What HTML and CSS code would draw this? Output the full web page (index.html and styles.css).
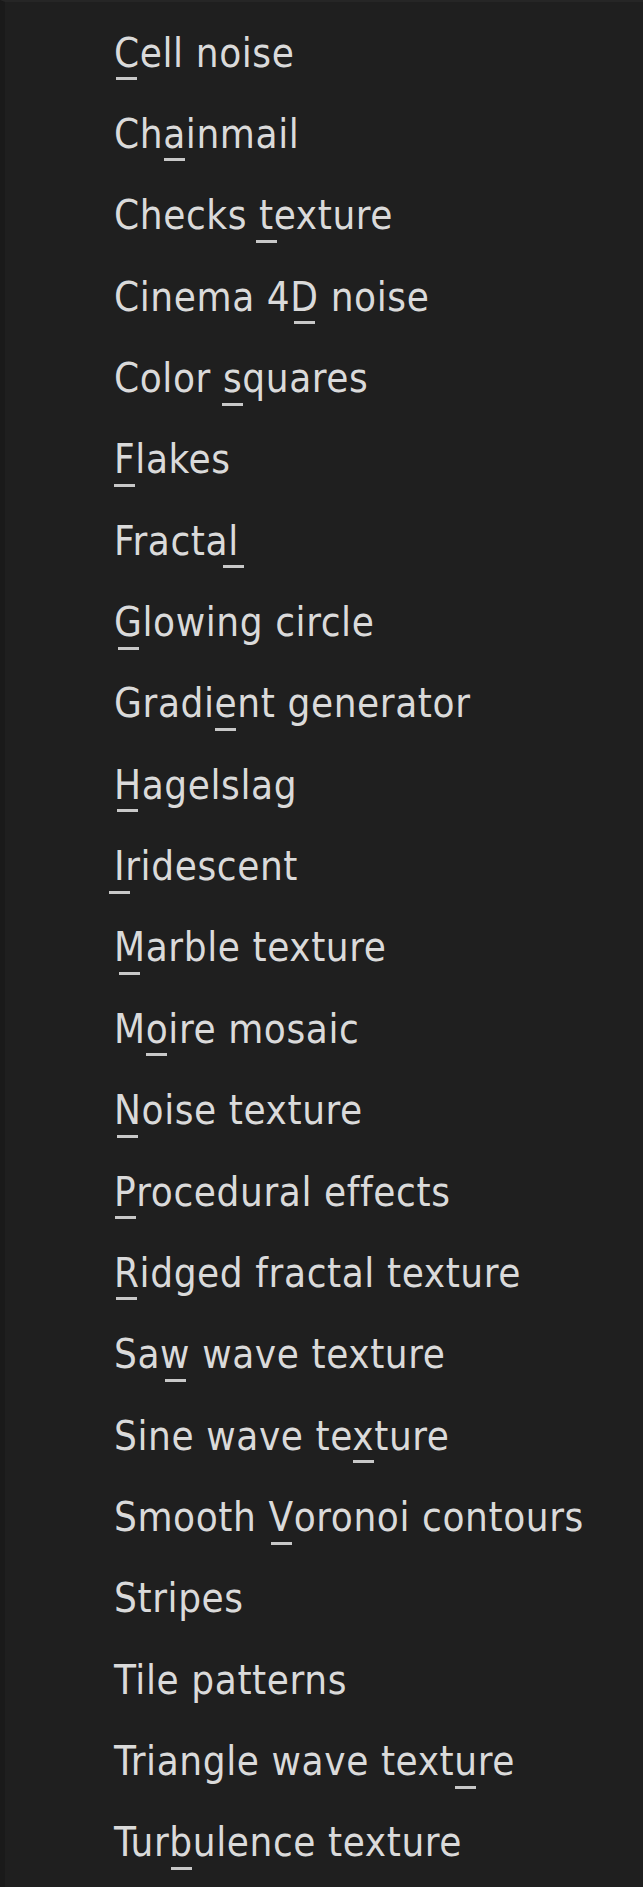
FILE: index.html
```html
<!DOCTYPE html>
<html>
<head>
<meta charset="utf-8">
<link rel="stylesheet" href="styles.css">
</head>
<body>
<div class="menu">
  <div class="item"><span class="key">C</span>ell noise</div>
  <div class="item">Ch<span class="key">a</span>inmail</div>
  <div class="item">Checks <span class="key">t</span>exture</div>
  <div class="item">Cinema 4<span class="key">D</span> noise</div>
  <div class="item">Color <span class="key">s</span>quares</div>
  <div class="item"><span class="key">F</span>lakes</div>
  <div class="item">Fracta<span class="key">l</span></div>
  <div class="item"><span class="key">G</span>lowing circle</div>
  <div class="item">Gradi<span class="key">e</span>nt generator</div>
  <div class="item"><span class="key">H</span>agelslag</div>
  <div class="item"><span class="key">I</span>ridescent</div>
  <div class="item"><span class="key">M</span>arble texture</div>
  <div class="item">M<span class="key">o</span>ire mosaic</div>
  <div class="item"><span class="key">N</span>oise texture</div>
  <div class="item"><span class="key">P</span>rocedural effects</div>
  <div class="item"><span class="key">R</span>idged fractal texture</div>
  <div class="item">Sa<span class="key">w</span> wave texture</div>
  <div class="item">Sine wave te<span class="key">x</span>ture</div>
  <div class="item">Smooth <span class="key">V</span>oronoi contours</div>
  <div class="item">Stripes</div>
  <div class="item">Tile patterns</div>
  <div class="item">Triangle wave text<span class="key">u</span>re</div>
  <div class="item">Tur<span class="key">b</span>ulence texture</div>
</div>
</body>
</html>
```
FILE: styles.css
```css
html, body {
  margin: 0;
  padding: 0;
  background: #1f1f1f;
}
body {
  width: 643px;
  height: 1887px;
  overflow: hidden;
}
.menu {
  box-sizing: border-box;
  height: 1887px;
  padding-top: 10.5px;
  padding-left: 114px;
  border-left: 5px solid #1a1a1a;
  border-top: 2px solid #262626;
  background: #1f1f1f;
  font-family: "DejaVu Sans Condensed", "DejaVu Sans", sans-serif;
  font-stretch: condensed;
  font-size: 40px;
  letter-spacing: 0.6px;
  color: #dadada;
}
.item {
  height: 81.36px;
  line-height: 81.36px;
  white-space: nowrap;
  margin-left: -5px;
}
.key {
  position: relative;
}
.key::after {
  content: "";
  position: absolute;
  left: 50%;
  top: calc(100% + 1.6px);
  width: 21px;
  height: 3px;
  margin-left: -10.5px;
  background: #c8c8c8;
}
```
